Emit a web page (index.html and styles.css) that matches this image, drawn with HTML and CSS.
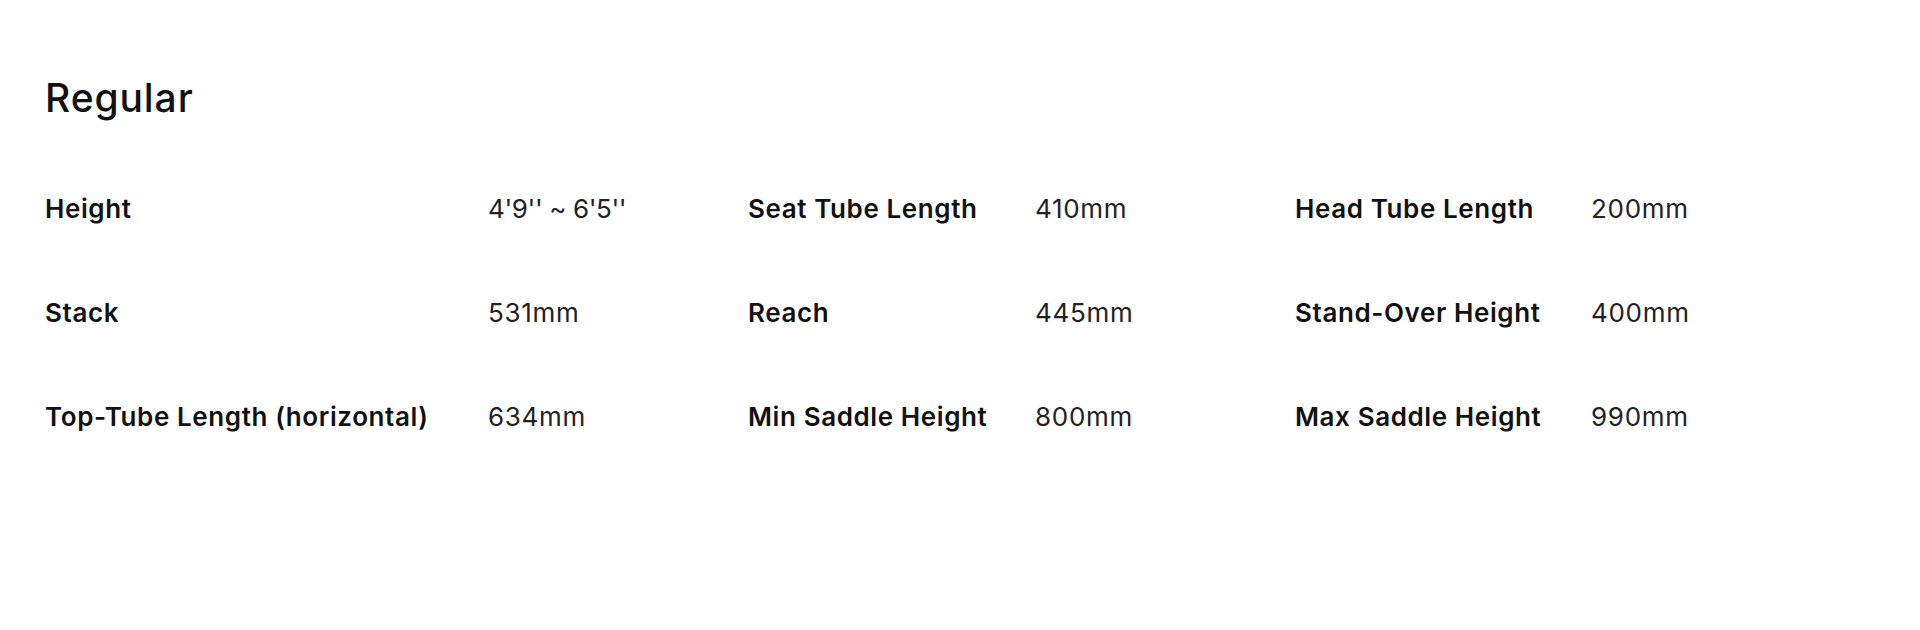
FILE: index.html
```html
<!DOCTYPE html>
<html lang="en">
<head>
    <meta charset="UTF-8">
    <meta name="viewport" content="width=device-width, initial-scale=1.0">
    <title>Geometry - Regular</title>
    <link rel="stylesheet" href="styles.css">
</head>
<body>
    <div class="geometry">
        <h2 class="size-title">Regular</h2>
        <div class="spec-grid">
            <div class="spec-label">Height</div>
            <div class="spec-value height-range">4'9'' ~ 6'5''</div>
            <div class="spec-label">Seat Tube Length</div>
            <div class="spec-value">410mm</div>
            <div class="spec-label">Head Tube Length</div>
            <div class="spec-value">200mm</div>

            <div class="spec-label">Stack</div>
            <div class="spec-value">531mm</div>
            <div class="spec-label">Reach</div>
            <div class="spec-value">445mm</div>
            <div class="spec-label">Stand-Over Height</div>
            <div class="spec-value">400mm</div>

            <div class="spec-label">Top-Tube Length (horizontal)</div>
            <div class="spec-value">634mm</div>
            <div class="spec-label">Min Saddle Height</div>
            <div class="spec-value">800mm</div>
            <div class="spec-label">Max Saddle Height</div>
            <div class="spec-value">990mm</div>
        </div>
    </div>
</body>
</html>
```

FILE: styles.css
```css
body {
    margin: 0;
    padding: 0;
    background-color: #fff;
    font-family: Inter, "Noto Sans", sans-serif;
    color: #111;
}
.geometry {
    padding: 74px 45px 0 45px;
}
.size-title {
    margin: 0;
    font-size: 39px;
    font-weight: 500;
    line-height: 47px;
    letter-spacing: 0.9px;
    color: #111;
}
.spec-grid {
    display: grid;
    grid-template-columns: 443px 260px 287px 260px 296px auto;
    row-gap: 72px;
    margin-top: 72px;
}
.spec-label {
    font-size: 26px;
    font-weight: 600;
    line-height: 32px;
    letter-spacing: 0.6px;
    color: #111;
}
.spec-value {
    font-size: 26px;
    font-weight: 400;
    line-height: 32px;
    letter-spacing: 0.7px;
    color: #222;
}
.height-range {
    letter-spacing: -0.4px;
}
```
